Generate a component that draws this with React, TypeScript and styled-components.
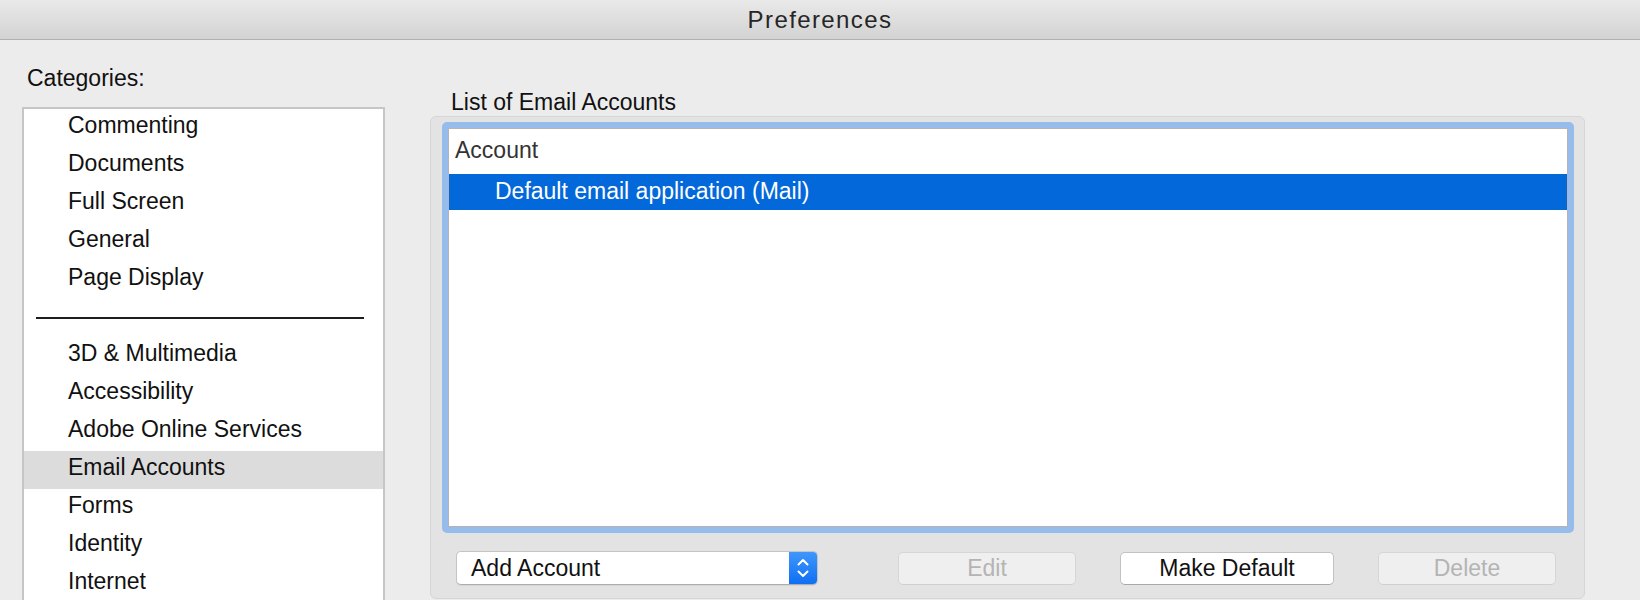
import styled, { createGlobalStyle } from "styled-components";

const GlobalStyle = createGlobalStyle`
  html, body {
    margin: 0;
    padding: 0;
    background: #ececec;
  }
  body {
    font-family: "Liberation Sans", Arial, sans-serif;
    color: #111;
  }
`;

const Window = styled.div`
  width: 1640px;
  height: 600px;
  overflow: hidden;
  display: flex;
  flex-direction: column;
  background: #ececec;
`;

const TitleBar = styled.div`
  height: 39px;
  flex: none;
  display: flex;
  align-items: center;
  justify-content: center;
  background: linear-gradient(#e9e9e9, #d3d3d3);
  border-bottom: 1px solid #b1b1b1;
  font-size: 24px;
  letter-spacing: 1.4px;
  color: #262626;
`;

const Body = styled.div`
  display: flex;
  gap: 45px;
  padding-left: 22px;
`;

const Sidebar = styled.div`
  width: 363px;
  flex: none;
  display: flex;
  flex-direction: column;
  padding-top: 24px;
`;

const Label = styled.div<{ $indent: number; $mb: number }>`
  font-size: 23px;
  line-height: 28px;
  margin-left: ${(p) => p.$indent}px;
  margin-bottom: ${(p) => p.$mb}px;
  color: #111;
`;

const CategoryList = styled.div`
  background: #fff;
  border: 2px solid #c6c6c6;
  display: flex;
  flex-direction: column;
`;

const CategoryRow = styled.div<{ $active?: boolean }>`
  height: 38px;
  line-height: 33px;
  padding-left: 44px;
  font-size: 23px;
  color: #111;
  background: ${(p) => (p.$active ? "#dcdcdc" : "transparent")};
`;

const SeparatorRow = styled.div`
  height: 38px;
  display: flex;
  align-items: center;
  padding-left: 12px;
`;

const SeparatorLine = styled.div`
  width: 328px;
  height: 2px;
  background: #1c1c1c;
`;

const Main = styled.div`
  width: 1155px;
  flex: none;
  display: flex;
  flex-direction: column;
  padding-top: 48px;
`;

const Panel = styled.div`
  background: #e3e3e3;
  border: 1px solid #d6d6d6;
  border-radius: 6px;
  padding: 5px 10px 13px 11px;
  display: flex;
  flex-direction: column;
`;

const FocusFrame = styled.div`
  height: 411px;
  box-sizing: border-box;
  border: 6px solid #96bcec;
  border-radius: 5px;
  display: flex;
`;

const Table = styled.div`
  flex: 1;
  background: #fff;
  border: 1px solid #b4b4b4;
  display: flex;
  flex-direction: column;
`;

const HeaderCell = styled.div`
  height: 45px;
  line-height: 43px;
  padding-left: 6px;
  font-size: 23px;
  color: #333;
`;

const AccountRow = styled.div<{ $selected?: boolean }>`
  height: 36px;
  line-height: 34px;
  padding-left: 46px;
  font-size: 23px;
  color: ${(p) => (p.$selected ? "#fff" : "#111")};
  background: ${(p) => (p.$selected ? "#0368d9" : "transparent")};
`;

const Footer = styled.div`
  margin-top: 18px;
  padding: 0 18px 0 14px;
  display: flex;
  align-items: center;
`;

const Popup = styled.div`
  width: 362px;
  height: 34px;
  box-sizing: border-box;
  display: flex;
  background: #fff;
  border: 1px solid #c4c4c4;
  border-bottom-color: #acacac;
  border-radius: 5px;
  overflow: hidden;
  box-shadow: 0 1px 1px rgba(0, 0, 0, 0.06);
`;

const PopupText = styled.div`
  flex: 1;
  padding-left: 14px;
  line-height: 32px;
  font-size: 23px;
  color: #111;
`;

const Stepper = styled.div`
  width: 28px;
  flex: none;
  display: flex;
  align-items: center;
  justify-content: center;
  background: linear-gradient(#3f97fb, #0f6ff4);
`;

const ButtonGroup = styled.div`
  margin-left: auto;
  display: flex;
  gap: 44px;
`;

const Button = styled.div<{ $width: number; $disabled?: boolean }>`
  width: ${(p) => p.$width}px;
  height: 33px;
  box-sizing: border-box;
  display: flex;
  align-items: center;
  justify-content: center;
  font-size: 23px;
  border-radius: 5px;
  border: 1px solid ${(p) => (p.$disabled ? "#d6d6d6" : "#c2c2c2")};
  border-bottom-color: ${(p) => (p.$disabled ? "#cfcfcf" : "#a9a9a9")};
  background: ${(p) => (p.$disabled ? "#efefef" : "#fff")};
  color: ${(p) => (p.$disabled ? "#b4b4b4" : "#111")};
`;

const topCategories = ["Commenting", "Documents", "Full Screen", "General", "Page Display"];
const moreCategories = [
  "3D & Multimedia",
  "Accessibility",
  "Adobe Online Services",
  "Email Accounts",
  "Forms",
  "Identity",
  "Internet",
];

const StepperIcon = () => (
  <svg width="14" height="24" viewBox="0 0 14 24" fill="none">
    <path d="M2.5 8.5 L7 4 L11.5 8.5" stroke="#fff" strokeWidth="2" strokeLinecap="round" strokeLinejoin="round" />
    <path d="M2.5 15.5 L7 20 L11.5 15.5" stroke="#fff" strokeWidth="2" strokeLinecap="round" strokeLinejoin="round" />
  </svg>
);

export default function App() {
  return (
    <>
      <GlobalStyle />
      <Window>
        <TitleBar>Preferences</TitleBar>
        <Body>
          <Sidebar>
            <Label $indent={5} $mb={15}>
              Categories:
            </Label>
            <CategoryList>
              {topCategories.map((c) => (
                <CategoryRow key={c}>{c}</CategoryRow>
              ))}
              <SeparatorRow>
                <SeparatorLine />
              </SeparatorRow>
              {moreCategories.map((c) => (
                <CategoryRow key={c} $active={c === "Email Accounts"}>
                  {c}
                </CategoryRow>
              ))}
            </CategoryList>
          </Sidebar>
          <Main>
            <Label $indent={21} $mb={0}>
              List of Email Accounts
            </Label>
            <Panel>
              <FocusFrame>
                <Table>
                  <HeaderCell>Account</HeaderCell>
                  <AccountRow $selected>Default email application (Mail)</AccountRow>
                </Table>
              </FocusFrame>
              <Footer>
                <Popup>
                  <PopupText>Add Account</PopupText>
                  <Stepper>
                    <StepperIcon />
                  </Stepper>
                </Popup>
                <ButtonGroup>
                  <Button $width={178} $disabled>
                    Edit
                  </Button>
                  <Button $width={214}>Make Default</Button>
                  <Button $width={178} $disabled>
                    Delete
                  </Button>
                </ButtonGroup>
              </Footer>
            </Panel>
          </Main>
        </Body>
      </Window>
    </>
  );
}
